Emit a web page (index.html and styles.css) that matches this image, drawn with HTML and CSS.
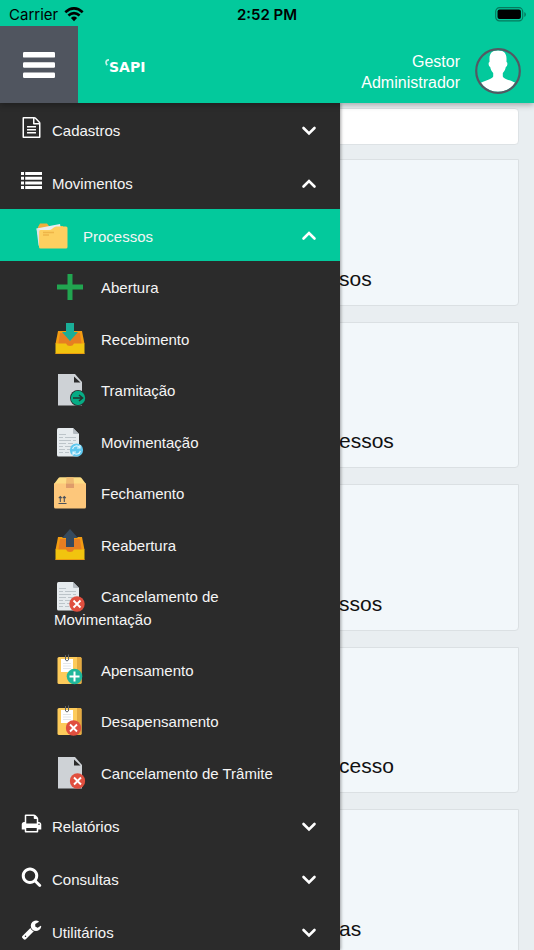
FILE: index.html
```html
<!DOCTYPE html>
<html lang="pt-BR">
<head>
<meta charset="utf-8">
<meta name="viewport" content="width=device-width, initial-scale=1">
<title>SAPI</title>
<link rel="stylesheet" href="styles.css">
</head>
<body>
<svg class="defs" aria-hidden="true">
  <symbol id="down" viewBox="0 0 16 16"><path d="M2.500 5L8 10.500 13.500 5" fill="none" stroke="#fff" stroke-width="2.600" stroke-linecap="round"/></symbol>
  <symbol id="up" viewBox="0 0 16 16"><path d="M2.500 10.500L8 5l5.500 5.500" fill="none" stroke="#fff" stroke-width="2.600" stroke-linecap="round"/></symbol>
  <symbol id="cancel" viewBox="0 0 16 16"><circle cx="8" cy="8" r="7.7" fill="#e04f3f"/><path d="M4.500 4.500l7 7m0-7l-7 7" stroke="#fff" stroke-width="1.900"/></symbol>
  <symbol id="page" viewBox="0 0 32 32">
    <path d="M3 3.500Q3 2 4.500 2H19l6 6v21q0 1.500-1.500 1.500h-19Q3 30.500 3 29z" fill="#e6ebee"/><path d="M19 2l6 6h-5q-1 0-1-1z" fill="#b4bbc1"/>
    <path d="M5 8.500h7M5 11.500h4m2 0h11M5 14.500h12m2 0h3M5 17.500h7m2 0h5M5 20.500h4m2 0h7M5 23.500h6m2 0h3M5 26.500h4m2 0h4" stroke="#bcc4c9" stroke-width="1"/>
  </symbol>
  <symbol id="sheet" viewBox="0 0 32 32"><path d="M4 0h17l7 8v23.500H4z" fill="#ced2d6"/><path d="M20 2.500v6h6.500z" fill="#2b2b2b"/></symbol>
  <symbol id="tray" viewBox="0 0 32 32"><path d="M4 8h24l2.500 13h-29z" fill="#f39c12"/><path d="M6 10h20l2 14H4z" fill="#e67e22"/><path d="M1.500 20.500H12q1 2.500 4 2.500t4-2.500h10.500V31h-29z" fill="#f1c40f"/><path d="M1.500 30.300h29v.7h-29z" fill="#e88b12"/></symbol>
  <symbol id="notes" viewBox="0 0 32 32"><path d="M3.500 4.500q0-1.500 1.500-1.500h21q1.500 0 1.500 1.500v24q0 1.500-1.500 1.500H5q-1.500 0-1.500-1.500z" fill="#fdcb5b"/><path d="M23 3h3q1.500 0 1.500 1.500v24q0 1.500-1.500 1.500h-3z" fill="#e5aa41"/><path d="M7 5h12v13H7z" fill="#fff"/><path d="M9 9.500h8M9 12h8M9 14.500h8" stroke="#dce0e3" stroke-width=".8"/><path d="M11.500 6V1.500m3 4V1m-3 0v5q1.500 2 3 0V.5" fill="none" stroke="#60656a" stroke-width="1"/></symbol>
</svg>

<header class="header">
  <div class="status">
    <div class="carrier">Carrier
      <svg width="20" height="15" viewBox="0 0 20 15"><g fill="none" stroke="#000" stroke-width="2.700"><path d="M1.300 5.200q8.700-7.600 17.400 0"/><path d="M4.400 8.500q5.600-4.800 11.200 0"/></g><path d="M6.900 10.900q3.100-2.600 6.200 0L10 14.200z"/></svg>
    </div>
    <div class="clock">2:52 PM</div>
    <div class="battery"><svg width="32" height="15" viewBox="0 0 32 15"><rect x=".7" y=".7" width="27" height="13.200" rx="3.800" fill="none" stroke="#067a5d" stroke-width="1.200"/><rect x="2.500" y="2.500" width="23.400" height="9.600" rx="2"/><path d="M29.300 5v5q1.600-.8 1.600-2.500T29.300 5z" fill="#067a5d"/></svg></div>
  </div>
  <div class="bar">
    <button class="toggle" type="button" aria-label="Menu"><svg width="32" height="26" viewBox="0 0 32 26" fill="#fff"><rect width="32" height="5.600" rx="1.200"/><rect y="10.200" width="32" height="5.600" rx="1.200"/><rect y="20.400" width="32" height="5.600" rx="1.200"/></svg></button>
    <a class="logo" href="#"><svg width="4" height="8" viewBox="0 0 4 8"><path d="M6 1Q1.500.2 1 3.200q0 1.800 1.300 3" fill="none" stroke="#c4f2e7" stroke-width="1.700"/></svg><span>SAPI</span></a>
    <p class="user">Gestor<br>Administrador</p>
    <svg class="avatar" viewBox="0 0 46 46"><defs><clipPath id="round"><circle cx="23" cy="23" r="20.800"/></clipPath></defs><path clip-path="url(#round)" fill="#fff" d="M23 2.300c5.400 0 8.500 2.900 8.500 8.200v3.400c1.500.2 1 4.700-.7 5.100-.6 3-1.500 4.400-3 6v3.500c1.400 4 13.500 3.600 16.500 10.500V46H2v-7c3-6.900 14.800-6.500 16.200-10.500V25c-1.500-1.600-2.400-3-3-6-1.700-.4-2.200-4.900-.7-5.100v-3.400c0-5.300 3.100-8.200 8.500-8.200z"/><circle cx="23" cy="23" r="21.800" fill="none" stroke="#535963" stroke-width="2.200"/></svg>
  </div>
</header>

<div class="stage">
  <main class="content">
    <input class="search" type="text" aria-label="Pesquisar">
    <a class="card" href="#">sos</a>
    <a class="card" href="#">essos</a>
    <a class="card" href="#">ssos</a>
    <a class="card" href="#">cesso</a>
    <a class="card" href="#">as</a>
  </main>

  <nav class="menu">
    <a class="item" href="#"><svg class="glyph" viewBox="0 0 1792 1792"><path d="M1596 380q28 28 48 76t20 88v1152q0 40-28 68t-68 28h-1344q-40 0-68-28t-28-68v-1600q0-40 28-68t68-28h896q40 0 88 20t76 48zm-444-244v376h376q-10-29-22-41l-313-313q-12-12-41-22zm384 1528v-1024h-416q-40 0-68-28t-28-68v-416h-768v1536h1280zm-1024-864q0-14 9-23t23-9h704q14 0 23 9t9 23v64q0 14-9 23t-23 9h-704q-14 0-23-9t-9-23v-64zm736 224q14 0 23 9t9 23v64q0 14-9 23t-23 9h-704q-14 0-23-9t-9-23v-64q0-14 9-23t23-9h704zm0 256q14 0 23 9t9 23v64q0 14-9 23t-23 9h-704q-14 0-23-9t-9-23v-64q0-14 9-23t23-9h704z"/></svg><span>Cadastros</span><svg class="arrow"><use href="#down"/></svg></a>
    <a class="item" href="#"><svg class="glyph" viewBox="0 0 21 21"><path d="M0 2h3v3H0zM4.200 2H21v3H4.200zM0 6.700h3v3H0zM4.200 6.700H21v3H4.200zM0 11.400h3v3H0zM4.200 11.400H21v3H4.200zM0 16.100h3v3H0zM4.200 16.100H21v3H4.200z"/></svg><span>Movimentos</span><svg class="arrow"><use href="#up"/></svg></a>
    <a class="item active" href="#"><svg class="folder" viewBox="0 0 32 26"><path d="M2 4l2-3.500h7L13 3h14v10H2z" fill="#f0ae3c"/><path d="M.5 5.500L24 1l2 10-22 10z" fill="#e9edf0"/><path d="M.5 5.500l3.500 1v17l-1.500-1z" fill="#dde2e6"/><path d="M3.200 8.500Q3 7 4.500 7H13q2 0 3.500-1.500T20 3.500h10q1.500 0 1.500 1.500v19q0 1.500-1.500 1.500H4.500Q3 25.500 3 24z" fill="#fdcf60"/><path d="M7 9.500h11M7 12h6" stroke="#eeb548" stroke-width="1.400"/></svg><span>Processos</span><svg class="arrow"><use href="#up"/></svg></a>
    <ul class="sub">
      <li><a href="#"><svg class="pic" viewBox="0 0 32 32"><path d="M13.500 3h5v10.500H29v5H18.500V29h-5V18.500H3v-5h10.500z" fill="#21a550"/></svg>Abertura</a></li>
      <li><a href="#"><svg class="pic" viewBox="0 0 32 32"><use href="#tray"/><path d="M12 0h8v9h4l-8 9-8-9h4z" fill="#1aae98"/></svg>Recebimento</a></li>
      <li><a href="#"><svg class="pic" viewBox="0 0 32 32"><use href="#sheet"/><circle cx="24" cy="24" r="8" fill="#2b2b2b"/><circle cx="24" cy="24" r="7.200" fill="#06ab84"/><path d="M19 24h9m-3-3l3.500 3-3.500 3" fill="none" stroke="#26332f" stroke-width="1.600"/></svg>Tramitação</a></li>
      <li><a href="#"><svg class="pic" viewBox="0 0 32 32"><use href="#page"/><circle cx="22.500" cy="24" r="6.600" fill="#60c8ef"/><path d="M18.600 23a4 4 0 0 1 7-1.600m.8 3.600a4 4 0 0 1-7 1.600M26 19v3h-3M19 29v-3h3" fill="none" stroke="#e0f5fd" stroke-width="1.200"/></svg>Movimentação</a></li>
      <li><a href="#"><svg class="pic" viewBox="0 0 32 32"><path d="M4.500 1Q5 .3 6 .3h20q1 0 1.500.7L32 7H0z" fill="#fddd85"/><path d="M0 6.500h32V30q0 1.500-1.500 1.500h-29Q0 31.500 0 30z" fill="#fdc77b"/><path d="M12.500.3h7l.5 6.200h-8z" fill="#f0bb72"/><path d="M12 6.500h8V11h-8z" fill="#df9c6a"/><path d="M4.500 26.500h8M6.300 25v-5m4 5v-5M4.800 21.200l1.500-1.700 1.500 1.700m1 0l1.500-1.700 1.500 1.700" fill="none" stroke="#4a515b" stroke-width="1.100"/></svg>Fechamento</a></li>
      <li><a href="#"><svg class="pic" viewBox="0 0 32 32"><use href="#tray"/><path d="M16 0l8 9h-4v9h-8V9H8z" fill="#34495e"/></svg>Reabertura</a></li>
      <li><a href="#"><svg class="pic" viewBox="0 0 32 32"><use href="#page"/><use href="#cancel" x="15" y="16" width="16" height="16"/></svg>Cancelamento de Movimentação</a></li>
      <li><a href="#"><svg class="pic" viewBox="0 0 32 32"><use href="#notes"/><circle cx="20.500" cy="22.500" r="7.800" fill="#1fb79b"/><path d="M15.500 22.500h10m-5-5v10" stroke="#fff" stroke-width="2"/></svg>Apensamento</a></li>
      <li><a href="#"><svg class="pic" viewBox="0 0 32 32"><use href="#notes"/><use href="#cancel" x="11.500" y="15" width="16" height="16"/></svg>Desapensamento</a></li>
      <li><a href="#"><svg class="pic" viewBox="0 0 32 32"><use href="#sheet"/><use href="#cancel" x="15.500" y="16" width="16" height="16"/></svg>Cancelamento de Trâmite</a></li>
    </ul>
    <a class="item" href="#"><svg class="glyph" viewBox="0 0 1792 1792"><path d="M448 1536h896v-256h-896v256zm0-640h896v-384h-160q-40 0-68-28t-28-68v-160h-640v640zm1152 64q0-26-19-45t-45-19-45 19-19 45 19 45 45 19 45-19 19-45zm128 0v416q0 13-9.500 22.500t-22.500 9.500h-224v160q0 40-28 68t-68 28h-960q-40 0-68-28t-28-68v-160h-224q-13 0-22.500-9.500t-9.500-22.500v-416q0-79 56.500-135.500t135.500-56.500h64v-544q0-40 28-68t68-28h672q40 0 88 20t76 48l152 152q28 28 48 76t20 88v256h64q79 0 135.500 56.500t56.500 135.500z"/></svg><span>Relatórios</span><svg class="arrow"><use href="#down"/></svg></a>
    <a class="item" href="#"><svg class="glyph" viewBox="0 0 1792 1792"><path d="M1216 832q0-185-131.500-316.500t-316.500-131.500-316.500 131.500-131.500 316.500 131.500 316.500 316.500 131.500 316.500-131.500 131.500-316.500zm512 832q0 52-38 90t-90 38q-54 0-90-38l-343-342q-179 124-399 124-143 0-273.500-55.500t-225-150-150-225-55.500-273.500 55.500-273.500 150-225 225-150 273.500-55.500 273.500 55.500 225 150 150 225 55.500 273.500q0 220-124 399l343 343q37 37 37 90z"/></svg><span>Consultas</span><svg class="arrow"><use href="#down"/></svg></a>
    <a class="item" href="#"><svg class="glyph" viewBox="0 0 1792 1792"><path d="M448 1472q0-26-19-45t-45-19-45 19-19 45 19 45 45 19 45-19 19-45zm644-420l-682 682q-37 37-90 37-52 0-91-37l-106-108q-38-36-38-90 0-53 38-91l681-681q39 98 114.500 173.500t173.500 114.500zm634-435q0 39-23 106-47 134-164.500 217.500t-258.500 83.500q-185 0-316.500-131.500t-131.500-316.500 131.500-316.500 316.500-131.500q58 0 121.500 16.500t107.500 46.500q16 11 16 28t-16 28l-293 169v224l193 107q5-3 79-48.500t135.500-81 70.500-35.500q15 0 23.500 10t8.500 25z"/></svg><span>Utilitários</span><svg class="arrow"><use href="#down"/></svg></a>
  </nav>
</div>
</body>
</html>
```
FILE: styles.css
```css
* { box-sizing: border-box; }
:root { --menu-width: 340px; }
body {
  margin: 0;
  height: 100vh;
  display: flex;
  flex-direction: column;
  overflow: hidden;
  background: #e9eef1;
  font-family: "Liberation Sans", Arial, sans-serif;
  font-size: 15px;
}
a { color: inherit; text-decoration: none; }
.defs { position: absolute; width: 0; height: 0; }

.header {
  flex: none;
  background: #03c99c;
  box-shadow: 0 2px 6px rgba(0, 0, 0, .3);
  z-index: 1;
}
.status {
  height: 26px;
  display: grid;
  grid-template-columns: 1fr auto 1fr;
  align-items: center;
  padding: 2px 7px 0 7px;
  font-family: Inter, sans-serif;
  color: #000;
}
.carrier { display: flex; align-items: center; gap: 6px; padding-left: 2px; }
.clock { font-weight: 600; }
.battery { display: flex; justify-content: flex-end; }
.bar { display: flex; align-items: center; height: 77px; padding-right: 13px; }
.toggle {
  width: 78px;
  height: 100%;
  padding: 0;
  border: 0;
  background: #50555f;
  display: grid;
  place-items: center;
}
.logo {
  display: flex;
  align-items: flex-start;
  margin-left: 27px;
  padding-top: 5px;
  color: #fff;
  font: bold 14px/16px "DejaVu Sans", sans-serif;
}
.user {
  margin: 0 15px 0 auto;
  padding-top: 14px;
  text-align: right;
  color: #fff;
  font-size: 16px;
  line-height: 21px;
}
.avatar { width: 46px; height: 46px; margin-top: 12px; }

.stage { flex: 1; min-height: 0; position: relative; overflow: hidden; }
.content { display: flex; flex-direction: column; padding: 5px 15px 16px; }
.search {
  flex: none;
  width: 100%;
  height: 37px;
  margin-bottom: 14px;
  padding: 0 12px;
  border: 1px solid #dde2e5;
  border-radius: 4px;
  background: #fff;
}
.card {
  display: flex;
  align-items: flex-end;
  height: 147px;
  margin-bottom: 16px;
  padding: 0 0 14px calc(var(--menu-width) - 17px);
  border: 1px solid #dbe0e3;
  border-radius: 0 0 4px 4px;
  background: #f2f7fa;
  color: #111;
  font-size: 21px;
  line-height: 24px;
}
.card:nth-of-type(even) { height: 146px; }

.menu {
  position: absolute;
  top: 0;
  bottom: 0;
  left: 0;
  width: var(--menu-width);
  overflow: hidden;
  background: #2b2b2b;
  color: #f5f5f5;
  box-shadow: 1px 0 3px rgba(0, 0, 0, .35);
}
.item {
  display: flex;
  align-items: center;
  gap: 10px;
  height: 53px;
  padding: 2px 23px 0 21px;
}
.glyph { width: 21px; height: 21px; margin-bottom: 6px; fill: #fff; }
.arrow { width: 16px; height: 16px; margin-left: auto; }
.active { height: 52px; padding-left: 36px; gap: 15px; background: #03c99c; }
.folder { width: 32px; height: 26px; }
.sub { list-style: none; margin: 0; padding: 0 0 1px; }
.sub a {
  display: block;
  min-height: 52px;
  padding: 10px 30px 13px 54px;
  line-height: 23px;
}
.sub li:nth-child(even) a { min-height: 51px; }
.pic { width: 32px; height: 32px; margin: 0 15px -4px 0; vertical-align: -6px; }
```
